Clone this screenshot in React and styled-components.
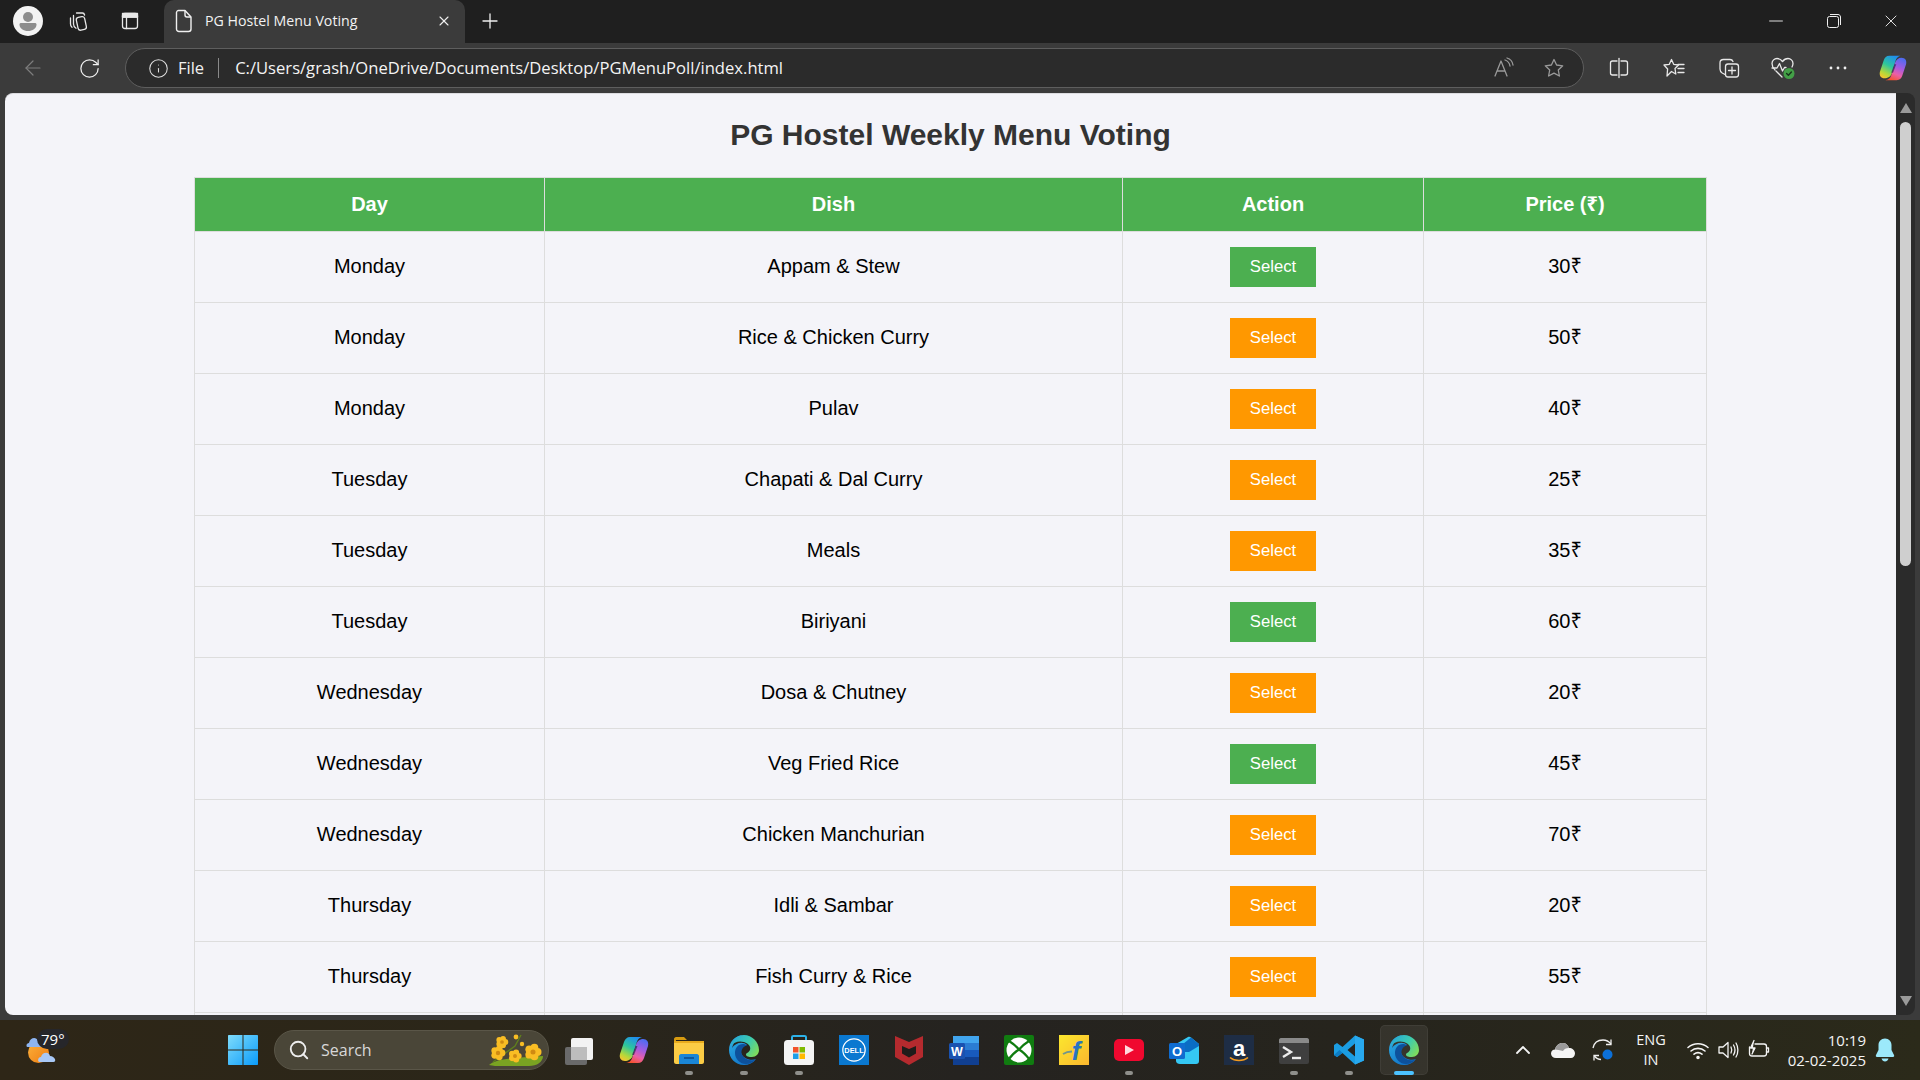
import React from 'react';
import styled, { createGlobalStyle } from 'styled-components';
import { ArrowLeft, ChevronUp, Info, Minus, Plus, RotateCw, Search, X } from 'lucide-react';

const GlobalStyle = createGlobalStyle`
  html, body {
    margin: 0;
    height: 100%;
    overflow: hidden;
    background: #3b3b3b;
  }
  * {
    box-sizing: border-box;
  }
`;

const GREEN = '#4caf50';
const ORANGE = '#ff9800';

const menu = [
  ['Monday', 'Appam & Stew', GREEN, '30₹'],
  ['Monday', 'Rice & Chicken Curry', ORANGE, '50₹'],
  ['Monday', 'Pulav', ORANGE, '40₹'],
  ['Tuesday', 'Chapati & Dal Curry', ORANGE, '25₹'],
  ['Tuesday', 'Meals', ORANGE, '35₹'],
  ['Tuesday', 'Biriyani', GREEN, '60₹'],
  ['Wednesday', 'Dosa & Chutney', ORANGE, '20₹'],
  ['Wednesday', 'Veg Fried Rice', GREEN, '45₹'],
  ['Wednesday', 'Chicken Manchurian', ORANGE, '70₹'],
  ['Thursday', 'Idli & Sambar', ORANGE, '20₹'],
  ['Thursday', 'Fish Curry & Rice', ORANGE, '55₹'],
];

/* ---- browser chrome icons ---- */

const Glyph = ({ size = 24, children, stroke = '#e8e8e8', width = 1.3 }) => (
  <svg width={size} height={size} viewBox="0 0 24 24" fill="none" stroke={stroke} strokeWidth={width} strokeLinecap="round" strokeLinejoin="round">
    {children}
  </svg>
);

const Avatar = () => (
  <svg width="30" height="30" viewBox="0 0 30 30">
    <circle cx="15" cy="15" r="15" fill="#f3f3f3" />
    <circle cx="15" cy="11" r="5" fill="#8d8d8d" />
    <path d="M6.5 18.5 C6.5 17.4 7.4 17 8.5 17 H21.5 C22.6 17 23.5 17.4 23.5 18.5 C23.5 22.5 19.5 25 15 25 C10.5 25 6.5 22.5 6.5 18.5Z" fill="#8d8d8d" />
  </svg>
);

const CollectionsTabIcon = () => (
  <Glyph>
    <path d="M4.5 9 L4.5 15 C4.5 16.5 5 17.5 6 18.3" />
    <path d="M7.5 6.5 L7.5 15 C7.5 17 8.5 18.3 10 19.2" />
    <rect x="11" y="8" width="8.5" height="13" rx="2.5" transform="rotate(-12 15 14)" />
    <path d="M10.5 4 L16.5 4 C17.6 4 18.3 4.8 18.6 6" />
  </Glyph>
);

const VerticalTabsIcon = () => (
  <Glyph>
    <rect x="4.5" y="4.5" width="15" height="15" rx="2.5" />
    <path d="M4.5 8 H19.5 M8.5 8 V19.5" />
    <rect x="4.5" y="4.5" width="15" height="3.5" fill="#e8e8e8" />
  </Glyph>
);

const DocIcon = () => (
  <svg width="18" height="24" viewBox="0 0 18 24" fill="none" stroke="#f0f0f0" strokeWidth="1.4" strokeLinejoin="round">
    <path d="M3.5 1.5 H10 L16 8 V20 C16 21.5 15 22.5 13.5 22.5 H4 C2.5 22.5 1.5 21.5 1.5 20 V3.5 C1.5 2.5 2.5 1.5 3.5 1.5Z" />
    <path d="M10 1.5 V6 C10 7.2 10.8 8 12 8 H16" />
  </svg>
);

const RestoreIcon = () => (
  <svg width="14" height="14" viewBox="0 0 14 14" fill="none" stroke="#f0f0f0" strokeWidth="1">
    <rect x="0.5" y="2.5" width="11" height="11" rx="2" />
    <path d="M3 0.5 H11 C12.4 0.5 13.5 1.6 13.5 3 V11" />
  </svg>
);

const ReadAloudIcon = () => (
  <Glyph stroke="#9a9a9a">
    <path d="M3 20 L9 5 L15 20 M5 15 H13" />
    <path d="M13 4 C16 5 17.5 7 18 10 M15 2 C18.5 3 20.5 5.5 21 9" />
  </Glyph>
);

const StarIcon = ({ stroke }) => (
  <Glyph stroke={stroke}>
    <path d="M12 3.5 L14.6 9 L20.7 9.8 L16.3 14 L17.4 20 L12 17.1 L6.6 20 L7.7 14 L3.3 9.8 L9.4 9Z" />
  </Glyph>
);

const SplitIcon = () => (
  <Glyph>
    <path d="M10 5 H5.5 C4.4 5 3.5 5.9 3.5 7 V17 C3.5 18.1 4.4 19 5.5 19 H10" />
    <path d="M14 5 H18.5 C19.6 5 20.5 5.9 20.5 7 V17 C20.5 18.1 19.6 19 18.5 19 H14" />
    <path d="M12 2.5 V21.5" />
  </Glyph>
);

const FavoritesIcon = () => (
  <Glyph>
    <path d="M9.5 3.5 L11.7 8.3 L16.5 9 L13 12.5 L13.8 18 L9.5 15.5 L5 20 L5.6 13 L2 9 L7.3 8.3Z" />
    <path d="M16 8.5 H22 M16 12.5 H22 M16 16.5 H22" />
  </Glyph>
);

const CollectionsIcon = () => (
  <Glyph>
    <path d="M8 18.5 L5.2 17 C4 16.3 3 14.8 3 13 V7 C3 5 4.5 3.5 6.5 3.5 H13 C14.5 3.5 15.5 4.2 16 5.5" />
    <rect x="8.5" y="8" width="13" height="13" rx="2.5" />
    <path d="M15 11 V18 M11.5 14.5 H18.5" />
  </Glyph>
);

const HealthIcon = () => (
  <svg width="26" height="26" viewBox="0 0 26 26" fill="none" stroke="#e8e8e8" strokeWidth="1.3" strokeLinejoin="round" strokeLinecap="round">
    <path d="M5 15 C2.5 12.5 2 10.5 2 8.5 C2 5.5 4.5 3.5 7 3.5 C9 3.5 11 4.5 12.5 6.5 C14 4.5 16 3.5 18 3.5 C20.5 3.5 23 5.5 23 8.5 C23 10 22.5 11 22 12" />
    <path d="M2 13 H7 L9.5 8.5 L12.5 16 L14.5 12.5 H16" />
    <path d="M6 16 L12 22" />
    <circle cx="19" cy="18.5" r="5.5" fill="#43a047" stroke="none" />
    <path d="M16.6 18.5 L18.4 20.3 L21.4 17" stroke="#17331a" strokeWidth="1.4" />
  </svg>
);

const MoreIcon = () => (
  <svg width="20" height="6" viewBox="0 0 20 6" fill="#f0f0f0">
    <circle cx="3" cy="3" r="1.4" />
    <circle cx="10" cy="3" r="1.4" />
    <circle cx="17" cy="3" r="1.4" />
  </svg>
);

const CopilotIcon = ({ size = 30 }) => (
  <svg width={size} height={size} viewBox="0 0 30 30">
    <defs>
      <linearGradient id="copLeft" x1="0.7" y1="0" x2="0.2" y2="1">
        <stop offset="0" stopColor="#1f8df0" />
        <stop offset="0.45" stopColor="#2dc79c" />
        <stop offset="0.8" stopColor="#b5d83a" />
        <stop offset="1" stopColor="#f7c52e" />
      </linearGradient>
      <linearGradient id="copRight" x1="0.7" y1="0" x2="0.3" y2="1">
        <stop offset="0" stopColor="#4f6bf0" />
        <stop offset="0.4" stopColor="#a45be0" />
        <stop offset="0.7" stopColor="#ea5fa8" />
        <stop offset="1" stopColor="#f5532f" />
      </linearGradient>
    </defs>
    <path d="M11 2 H23 C20 2.5 18.5 5 17.5 8 L14 20 C13 24 9 26 6 26 C2 26 0 23 1 19 L5 7 C6 4 8 2 11 2Z" fill="url(#copLeft)" />
    <path d="M19 28 H7 C11 27.5 12.5 25 13.5 22 L17 10 C18 6 21 4 24 4 C28 4 30 7 29 11 L25 23 C24 26 22 28 19 28Z" fill="url(#copRight)" />
    <path d="M16.5 11 L18.5 11 L15 20 L13 20Z" fill="#1a1a40" opacity="0.6" />
  </svg>
);

/* ---- taskbar pictures ---- */

const Weather = () => (
  <svg width="32" height="32" viewBox="0 0 32 32">
    <defs>
      <linearGradient id="sun" x1="0" y1="0" x2="1" y2="1">
        <stop offset="0" stopColor="#fbb03b" />
        <stop offset="1" stopColor="#ef7d12" />
      </linearGradient>
    </defs>
    <circle cx="12.5" cy="18.5" r="10.5" fill="url(#sun)" />
    <path d="M1.5 13 C0 13 0 9 3 9 C4 4 10 2 12 7 C16 7 17 13 14 13Z" fill="#8db4f0" />
    <path d="M13.5 28 C11.5 28 11.5 23 15 23 C16 18 23 17 24 22 C29 22 31 28 27.5 28Z" fill="#a9c8f5" />
  </svg>
);

const WindowsLogo = () => (
  <svg width="30" height="30" viewBox="0 0 30 30">
    <defs>
      <linearGradient id="win" x1="0" y1="0" x2="1" y2="1">
        <stop offset="0" stopColor="#7fdcfb" />
        <stop offset="1" stopColor="#0a9bfb" />
      </linearGradient>
    </defs>
    <path d="M1 0 H14.5 V14.5 H0 V1 C0 .4 .4 0 1 0Z M15.5 0 H29 C29.6 0 30 .4 30 1 V14.5 H15.5Z M0 15.5 H14.5 V30 H1 C.4 30 0 29.6 0 29Z M15.5 15.5 H30 V29 C30 29.6 29.6 30 29 30 H15.5Z" fill="url(#win)" />
  </svg>
);

const Blossom = ({ x, y, r }) => (
  <g>
    {[0, 72, 144, 216, 288].map((angle) => (
      <circle
        key={angle}
        cx={x + r * Math.cos((angle * Math.PI) / 180)}
        cy={y + r * Math.sin((angle * Math.PI) / 180)}
        r={r * 0.85}
        fill="#f9bd24"
      />
    ))}
    <circle cx={x} cy={y} r={r * 0.55} fill="#d08a12" />
  </g>
);

const Flowers = () => (
  <svg width="58" height="36" viewBox="0 0 58 36">
    <path d="M2 33 C10 26 30 26 56 24 C56 30 50 34 42 34 H8Z" fill="#7aa322" />
    <path d="M6 30 L28 14 L34 3" stroke="#5f7f1d" strokeWidth="1.4" fill="none" />
    <Blossom x={15} y={10} r={3.4} />
    <Blossom x={11} y={21} r={4} />
    <Blossom x={28} y={24} r={3.6} />
    <Blossom x={46} y={20} r={4.6} />
    <circle cx="29" cy="5" r="2.4" fill="#f9bd24" />
    <circle cx="35" cy="12" r="2.2" fill="#f9bd24" />
  </svg>
);

const TaskView = () => (
  <svg width="30" height="30" viewBox="0 0 30 30">
    <rect x="1" y="12" width="22" height="18" rx="2" fill="#6a6a6a" />
    <rect x="7" y="3" width="22" height="22" rx="2" fill="#f2f2f2" />
    <rect x="7" y="12" width="16" height="13" fill="#bdbdbd" />
  </svg>
);

const Explorer = () => (
  <svg width="30" height="30" viewBox="0 0 30 30">
    <path d="M0 4 C0 3 1 2 2 2 H10 L13 5 H2 V8 H0Z" fill="#d69a10" />
    <path d="M0 6 H30 V27 C30 28 29 29 28 29 H2 C1 29 0 28 0 27Z" fill="#fbcc45" />
    <path d="M0 6 H30 V8 H0Z" fill="#e9ac1e" />
    <path d="M5 21 C5 20 6 19 7 19 H23 C24 19 25 20 25 21 V29 H5Z" fill="#1a86d6" />
    <path d="M10 23 H20" stroke="#0b4f8e" strokeWidth="1.6" />
  </svg>
);

const Edge = () => (
  <svg width="30" height="30" viewBox="0 0 30 30">
    <defs>
      <linearGradient id="edgeBlue" x1="0" y1="0" x2="0.7" y2="1">
        <stop offset="0" stopColor="#2fb4e8" />
        <stop offset="1" stopColor="#0f6fc6" />
      </linearGradient>
      <linearGradient id="edgeGreen" x1="0" y1="0.2" x2="1" y2="0.7">
        <stop offset="0" stopColor="#27a7d8" />
        <stop offset="0.55" stopColor="#3ccbb0" />
        <stop offset="1" stopColor="#7fdc5c" />
      </linearGradient>
    </defs>
    <path d="M15 0 C6 0 0 7 0 15 C0 23 6 30 15 30 C20 30 24 28 27 24 C22 26 14 24 12 18 C11 14 13 10 18 10 C14 6 6 8 3 13 C5 6 10 0 15 0Z" fill="url(#edgeBlue)" />
    <path d="M15 0 C8 0 3 5 1.5 11 C5 7 10 5.5 15 7 C20 8.5 22 12 21 15 C20 17.5 17 18 17 19.5 C17 21.5 20 22 23 22 C27 22 30 19 30 15 C30 7 23 0 15 0Z" fill="url(#edgeGreen)" />
    <path d="M14 9 C9 9 6 13 6 18 C6 24 11 29 17 29 C20 29 24 27.5 26 25 C21 26.5 15 24 13 19.5 C11.5 16 13.5 11 18 10.5 C17 9.5 15.5 9 14 9Z" fill="#0d519c" />
  </svg>
);

const Store = () => (
  <svg width="30" height="30" viewBox="0 0 30 30">
    <path d="M8 6 V2 C8 1 9 1 9.5 1 H20.5 C21 1 22 1 22 2 V6" fill="none" stroke="#2db3ea" strokeWidth="2" />
    <rect x="0" y="5" width="30" height="25" rx="3.5" fill="#f4f4f4" />
    <rect x="9" y="12" width="5.5" height="5.5" fill="#f2532a" />
    <rect x="15.5" y="12" width="5.5" height="5.5" fill="#7fba00" />
    <rect x="9" y="18.5" width="5.5" height="5.5" fill="#1e9fe8" />
    <rect x="15.5" y="18.5" width="5.5" height="5.5" fill="#ffb900" />
  </svg>
);

const Dell = () => (
  <svg width="30" height="30" viewBox="0 0 30 30">
    <rect width="30" height="30" fill="#0a78d0" />
    <circle cx="15" cy="15" r="11.2" fill="none" stroke="#fff" strokeWidth="1.2" />
    <text x="15" y="17.6" textAnchor="middle" fontFamily="Liberation Sans" fontWeight="700" fontSize="7.4" fill="#fff">DELL</text>
  </svg>
);

const McAfee = () => (
  <svg width="28" height="30" viewBox="0 0 28 30">
    <path d="M0 1 L14 7 L28 1 V22 L14 30 L0 22Z" fill="#b52a2e" />
    <path d="M7 11 L14 14 L21 11 V18.5 L14 22.5 L7 18.5Z" fill="#1f1c1a" />
  </svg>
);

const Word = () => (
  <svg width="30" height="30" viewBox="0 0 30 30">
    <rect x="4" y="1" width="26" height="29" rx="1.5" fill="#185abd" />
    <rect x="4" y="1" width="26" height="7" fill="#41a5ee" />
    <rect x="4" y="8" width="26" height="7" fill="#2b7cd3" />
    <rect x="4" y="22" width="26" height="8" fill="#103f91" />
    <rect x="0" y="8" width="16" height="16" rx="1.5" fill="#1a52b0" />
    <text x="8" y="20.5" textAnchor="middle" fontFamily="Liberation Sans" fontWeight="700" fontSize="12.5" fill="#fff">W</text>
  </svg>
);

const Xbox = () => (
  <svg width="30" height="30" viewBox="0 0 30 30">
    <rect width="30" height="30" rx="2" fill="#107c10" />
    <circle cx="15" cy="15" r="12.5" fill="#fff" />
    <path d="M5 6 C9 8.5 12.5 11.5 15 14.5 C17.5 11.5 21 8.5 25 6" fill="none" stroke="#107c10" strokeWidth="2.2" />
    <path d="M4.5 24.5 C7.5 20.5 11.5 16.5 15 14.5 C18.5 16.5 22.5 20.5 25.5 24.5" fill="none" stroke="#107c10" strokeWidth="2.2" />
  </svg>
);

const Flipkart = () => (
  <svg width="30" height="30" viewBox="0 0 30 30">
    <defs>
      <linearGradient id="flip" x1="0" y1="0" x2="1" y2="1">
        <stop offset="0" stopColor="#fbe72e" />
        <stop offset="1" stopColor="#fbb72e" />
      </linearGradient>
    </defs>
    <rect width="30" height="30" fill="url(#flip)" />
    <text x="17" y="25" textAnchor="middle" fontFamily="Liberation Sans" fontStyle="italic" fontWeight="700" fontSize="26" fill="#2874c0">f</text>
    <path d="M4 19 C7 17 10 16.5 13 16.5" stroke="#2874c0" strokeWidth="1.8" fill="none" opacity="0.65" />
  </svg>
);

const YouTube = () => (
  <svg width="30" height="22" viewBox="0 0 30 22">
    <rect width="30" height="22" rx="5" fill="#f0082f" />
    <path d="M11 6 L20 11 L11 16Z" fill="#ffd9df" />
  </svg>
);

const Outlook = () => (
  <svg width="30" height="30" viewBox="0 0 30 30">
    <path d="M7 9 L19 2 C20 1.5 21 1.5 22 2.5 L30 9 V26 C30 28 29 29 27 29 H11 C9 29 7 28 7 26Z" fill="#35c8f4" />
    <path d="M14 9 L22 2.5 L30 9 V11 L20 17 H14Z" fill="#0a6cc4" />
    <rect x="0" y="8" width="16" height="16" rx="1.5" fill="#0f6cd0" />
    <text x="8" y="20.5" textAnchor="middle" fontFamily="Liberation Sans" fontWeight="700" fontSize="13" fill="#fff">O</text>
  </svg>
);

const Amazon = () => (
  <svg width="30" height="30" viewBox="0 0 30 30">
    <rect width="30" height="30" fill="#1e2d45" />
    <text x="15" y="21" textAnchor="middle" fontFamily="Liberation Sans" fontWeight="700" fontSize="22" fill="#fff">a</text>
    <path d="M6 22.5 C11 26.5 19 26.5 24 22.5" fill="none" stroke="#f29a1f" strokeWidth="1.6" />
  </svg>
);

const Terminal = () => (
  <svg width="30" height="30" viewBox="0 0 30 30">
    <rect x="0" y="3" width="30" height="26" rx="2" fill="#3f3f3f" />
    <path d="M0 5 C0 4 1 3 2 3 H28 C29 3 30 4 30 5 V8 H0Z" fill="#8a8a8a" />
    <path d="M4 12 L12 17 L4 22" fill="none" stroke="#ececec" strokeWidth="2.4" />
    <path d="M13 23 H22" stroke="#ececec" strokeWidth="2.4" />
  </svg>
);

const VSCode = () => (
  <svg width="30" height="30" viewBox="0 0 30 30">
    <path d="M21 0.5 L30 4.5 V25.5 L21 29.5 L8.5 18 L3 22 L0 20 V10 L3 8 L8.5 12Z M21 8.5 L13.5 15 L21 21.5Z" fill="#1b9de2" />
    <path d="M21 0.5 L30 4.5 V25.5 L21 29.5Z" fill="#28a9ee" />
    <path d="M0 20 L3 22 L8.5 18 L5.5 15 Z" fill="#0d7cc4" />
  </svg>
);

const CloudIcon = () => (
  <svg width="24" height="16" viewBox="0 0 24 16">
    <path d="M5 16 C2 16 0 14 0 11.5 C0 9 2 7.5 4 7.5 C5 3 9 0.5 12 1 C15 1 17 3 18 6 C21 6 24 8 24 11.5 C24 14 22 16 20 16Z" fill="#f4f4f4" />
    <path d="M4 7.5 C5 3 9 0.5 12 1 C15 1 17 3 18 6 C15 6 13 7 12 9 C9 8 6 8 4 7.5Z" fill="#9a9a9a" />
  </svg>
);

const SyncIcon = () => (
  <svg width="24" height="24" viewBox="0 0 24 24" fill="none" stroke="#f0f0f0" strokeWidth="1.3">
    <path d="M2 10 C3 5 7 2 12 2 C15 2 18 3.5 20 6" />
    <path d="M20 1.5 V6.5 H15" />
    <path d="M10 21.5 C7 21.5 5 20 3.5 18" />
    <path d="M3 22.5 V17.5 H8" />
    <circle cx="16.5" cy="16.5" r="5" fill="#0c70d8" stroke="none" />
  </svg>
);

const WifiIcon = () => (
  <Glyph width={1.6} stroke="#f4f4f4">
    <path d="M2 9.5 C7.5 4.5 16.5 4.5 22 9.5" />
    <path d="M5 13 C9 9.5 15 9.5 19 13" />
    <path d="M8 16.2 C10.5 14.2 13.5 14.2 16 16.2" />
    <circle cx="12" cy="19.5" r="1" fill="#f4f4f4" />
  </Glyph>
);

const VolumeIcon = () => (
  <Glyph stroke="#f4f4f4">
    <path d="M3 9 H7 L12 4.5 V19.5 L7 15 H3Z" />
    <path d="M15 9 C16 11 16 13 15 15 M17.5 7 C19.3 10 19.3 14 17.5 17 M20 5 C22.5 9 22.5 15 20 19" />
  </Glyph>
);

const BatteryIcon = () => (
  <Glyph stroke="#f4f4f4">
    <path d="M9 6 H18 C19.5 6 20.5 7 20.5 8.5 V15.5 C20.5 17 19.5 18 18 18 H6 C4.5 18 3.5 17 3.5 15.5 V9" />
    <path d="M20.5 10 H22.5 V14 H20.5" />
    <path d="M8 2.5 L4.5 10 H9 L6 16" fill="#f4f4f4" />
  </Glyph>
);

const BellIcon = () => (
  <svg width="20" height="24" viewBox="0 0 20 24">
    <path d="M10 0.5 C6 0.5 3.5 3.5 3.5 7 V12 L1 17 C0.5 18 1 19 2 19 H18 C19 19 19.5 18 19 17 L16.5 12 V7 C16.5 3.5 14 0.5 10 0.5Z" fill="#9ce9fb" />
    <path d="M6.5 20.5 H13.5 C13 22.5 11.5 23.5 10 23.5 C8.5 23.5 7 22.5 6.5 20.5Z" fill="#9ce9fb" />
  </svg>
);

const apps = [
  { key: 'taskview', icon: <TaskView /> },
  { key: 'copilot', icon: <CopilotIcon /> },
  { key: 'explorer', icon: <Explorer />, open: true },
  { key: 'edge', icon: <Edge />, open: true },
  { key: 'store', icon: <Store />, open: true },
  { key: 'dell', icon: <Dell /> },
  { key: 'mcafee', icon: <McAfee /> },
  { key: 'word', icon: <Word /> },
  { key: 'xbox', icon: <Xbox /> },
  { key: 'flipkart', icon: <Flipkart /> },
  { key: 'youtube', icon: <YouTube />, open: true },
  { key: 'outlook', icon: <Outlook /> },
  { key: 'amazon', icon: <Amazon /> },
  { key: 'terminal', icon: <Terminal />, open: true },
  { key: 'vscode', icon: <VSCode />, open: true },
  { key: 'edge-active', icon: <Edge />, active: true },
];

export default function App() {
  return (
    <>
      <GlobalStyle />
      <Screen>
        <TabStrip>
          <StripButton $w={56}><Avatar /></StripButton>
          <StripButton $w={44}><CollectionsTabIcon /></StripButton>
          <StripButton $w={60}><VerticalTabsIcon /></StripButton>
          <Tab>
            <DocIcon />
            <TabTitle>PG Hostel Menu Voting</TabTitle>
            <X size={16} color="#f0f0f0" strokeWidth={1.6} />
          </Tab>
          <StripButton $w={50}><Plus size={24} color="#f0f0f0" strokeWidth={1.3} /></StripButton>
          <WindowControls>
            <WindowButton><Minus size={22} color="#f0f0f0" strokeWidth={1} /></WindowButton>
            <WindowButton><RestoreIcon /></WindowButton>
            <WindowButton><X size={20} color="#f0f0f0" strokeWidth={1.1} /></WindowButton>
          </WindowControls>
        </TabStrip>

        <Toolbar>
          <NavButton><ArrowLeft size={24} color="#7d7d7d" strokeWidth={1.2} /></NavButton>
          <NavButton><RotateCw size={23} color="#f0f0f0" strokeWidth={1.3} /></NavButton>
          <Omnibox>
            <Info size={21} color="#e0e0e0" strokeWidth={1.2} />
            <FileLabel>File</FileLabel>
            <OmniDivider />
            <Url>C:/Users/grash/OneDrive/Documents/Desktop/PGMenuPoll/index.html</Url>
            <OmniIcons>
              <ReadAloudIcon />
              <StarIcon stroke="#9a9a9a" />
            </OmniIcons>
          </Omnibox>
          <ToolIcons>
            <ToolSlot><SplitIcon /></ToolSlot>
            <ToolSlot><FavoritesIcon /></ToolSlot>
            <ToolSlot><CollectionsIcon /></ToolSlot>
            <ToolSlot><HealthIcon /></ToolSlot>
            <ToolSlot><MoreIcon /></ToolSlot>
            <ToolSlot><CopilotIcon size={28} /></ToolSlot>
          </ToolIcons>
        </Toolbar>

        <Viewport>
          <Page>
            <Title>PG Hostel Weekly Menu Voting</Title>
            <MenuTable>
              <colgroup>
                <col width="350" />
                <col width="578" />
                <col width="301" />
                <col width="283" />
              </colgroup>
              <thead>
                <tr>
                  <HeadCell>Day</HeadCell>
                  <HeadCell>Dish</HeadCell>
                  <HeadCell>Action</HeadCell>
                  <HeadCell>Price (₹)</HeadCell>
                </tr>
              </thead>
              <tbody>
                {menu.map(([day, dish, color, price]) => (
                  <tr key={dish}>
                    <Cell>{day}</Cell>
                    <Cell>{dish}</Cell>
                    <ActionCell><SelectButton $color={color}>Select</SelectButton></ActionCell>
                    <Cell>{price}</Cell>
                  </tr>
                ))}
                <tr>
                  <Cell />
                  <Cell />
                  <Cell />
                  <Cell />
                </tr>
              </tbody>
            </MenuTable>
          </Page>
          <Scrollbar>
            <ScrollArrow />
            <ScrollThumb />
            <ScrollArrow $down />
          </Scrollbar>
        </Viewport>

        <Taskbar>
          <WeatherSlot>
            <Weather />
            <TempBadge>79°</TempBadge>
          </WeatherSlot>
          <StartSlot><WindowsLogo /></StartSlot>
          <SearchBox>
            <Search size={22} color="#eeeeee" strokeWidth={2} />
            <SearchText>Search</SearchText>
            <FlowerWrap><Flowers /></FlowerWrap>
          </SearchBox>
          <Apps>
            {apps.map((app) => (
              <AppSlot key={app.key} $active={app.active}>
                {app.icon}
                {(app.open || app.active) && <RunDot $active={app.active} />}
              </AppSlot>
            ))}
          </Apps>
          <Tray>
            <TraySlot $w={40}><ChevronUp size={24} color="#f4f4f4" strokeWidth={1.8} /></TraySlot>
            <TraySlot $w={40}><CloudIcon /></TraySlot>
            <TraySlot $w={40}><SyncIcon /></TraySlot>
            <Lang>ENG<br />IN</Lang>
            <TraySlot $w={30}><WifiIcon /></TraySlot>
            <TraySlot $w={30}><VolumeIcon /></TraySlot>
            <TraySlot $w={30}><BatteryIcon /></TraySlot>
            <Clock>10:19<br />02-02-2025</Clock>
            <TraySlot $w={38}><BellIcon /></TraySlot>
          </Tray>
        </Taskbar>
      </Screen>
    </>
  );
}

const Screen = styled.div`
  display: flex;
  flex-direction: column;
  height: 100vh;
  width: 100vw;
  overflow: hidden;
  font-family: 'Open Sans', 'Noto Sans', sans-serif;
`;

const TabStrip = styled.div`
  display: flex;
  align-items: flex-start;
  flex: 0 0 43px;
  background: #1f1f1f;
`;

const StripButton = styled.div`
  display: flex;
  align-items: center;
  justify-content: center;
  flex: 0 0 ${(p) => p.$w}px;
  height: 41px;
`;

const Tab = styled.div`
  display: flex;
  align-items: center;
  flex: 0 0 301px;
  height: 43px;
  margin-left: 4px;
  padding: 0 13px 2px 11px;
  background: #3b3b3b;
  border-radius: 10px 10px 0 0;
`;

const TabTitle = styled.span`
  flex: 1;
  margin-left: 12px;
  color: #f2f2f2;
  font-size: 14.2px;
  line-height: 20px;
`;

const WindowControls = styled.div`
  display: flex;
  margin-left: auto;
`;

const WindowButton = styled.div`
  display: flex;
  align-items: center;
  justify-content: center;
  width: 57.5px;
  height: 41px;
`;

const Toolbar = styled.div`
  display: flex;
  align-items: center;
  flex: 0 0 50px;
  background: #3b3b3b;
  padding-left: 5px;
`;

const NavButton = styled.div`
  display: flex;
  align-items: center;
  justify-content: center;
  flex: 0 0 56px;
  height: 40px;
`;

const Omnibox = styled.div`
  display: flex;
  align-items: center;
  flex: 0 0 1459px;
  height: 40px;
  margin-left: 8px;
  padding: 0 17px 0 22px;
  background: #2b2b2b;
  border: 1px solid #5e5e5e;
  border-radius: 20px;
`;

const FileLabel = styled.span`
  margin: 0 0 2px 9px;
  color: #f0f0f0;
  font-size: 16.5px;
`;

const OmniDivider = styled.span`
  width: 1px;
  height: 20px;
  margin: 0 16px 0 14px;
  background: #8a8a8a;
`;

const Url = styled.span`
  flex: 1;
  margin-bottom: 2px;
  color: #f4f4f4;
  font-size: 16.6px;
`;

const OmniIcons = styled.div`
  display: flex;
  gap: 26px;
`;

const ToolIcons = styled.div`
  display: flex;
  flex: 1;
  margin-left: 8px;
`;

const ToolSlot = styled.div`
  display: flex;
  align-items: center;
  justify-content: center;
  flex: 1;
  height: 40px;
`;

const Viewport = styled.div`
  display: flex;
  flex: 1;
  min-height: 0;
  padding: 0 5px 5px 5px;
  background: #3b3b3b;
`;

const Page = styled.main`
  flex: 1;
  overflow: hidden;
  background: #f4f4f9;
  border-top: 1px solid #dcdce0;
  border-radius: 8px 0 0 8px;
  font-family: 'Liberation Sans', 'Noto Sans', Arial, sans-serif;
`;

const Title = styled.h1`
  margin: 24px 0 25px;
  color: #333;
  font-size: 30px;
  line-height: 34px;
  font-weight: 700;
  text-align: center;
`;

const MenuTable = styled.table`
  width: 80%;
  margin: 0 auto;
  table-layout: fixed;
  border-collapse: collapse;
`;

const HeadCell = styled.th`
  padding: 15px;
  background: ${GREEN};
  border: 1px solid #ddd;
  color: #fff;
  font-size: 20px;
  line-height: 23px;
  font-weight: 700;
  text-align: center;
`;

const Cell = styled.td`
  padding: 14px 15px 16px;
  height: 71px;
  border: 1px solid #ddd;
  color: #000;
  font-size: 20px;
  line-height: 23px;
  text-align: center;
`;

const ActionCell = styled(Cell)`
  padding: 15px;
`;

const SelectButton = styled.button`
  display: block;
  height: 40px;
  margin: 0 auto;
  padding: 0 20px;
  background: ${(p) => p.$color};
  border: 0;
  color: #fff;
  font-family: 'Liberation Sans', Arial, sans-serif;
  font-size: 16.67px;
`;

const Scrollbar = styled.div`
  display: flex;
  flex-direction: column;
  align-items: center;
  flex: 0 0 19px;
  padding: 10px 0 9px;
  background: #2b2b2b;
  border-radius: 0 8px 8px 0;
`;

const ScrollArrow = styled.div`
  width: 0;
  height: 0;
  border-left: 6.5px solid transparent;
  border-right: 6.5px solid transparent;
  ${(p) => (p.$down ? 'border-top: 10px solid #9a9a9a; margin-top: auto;' : 'border-bottom: 10px solid #9a9a9a;')}
`;

const ScrollThumb = styled.div`
  width: 11px;
  height: 444px;
  margin-top: 9px;
  background: #cfcfcf;
  border-radius: 6px;
`;

const Taskbar = styled.footer`
  display: flex;
  align-items: center;
  flex: 0 0 60px;
  background: linear-gradient(90deg, #2e2617 0%, #2b2619 25%, #252320 50%, #26241d 70%, #2b2a1a 100%);
  color: #f4f4f4;
`;

const WeatherSlot = styled.div`
  position: relative;
  display: flex;
  align-items: center;
  flex: 0 0 215px;
  height: 60px;
  padding-left: 26px;
`;

const TempBadge = styled.span`
  position: absolute;
  left: 37px;
  top: 9px;
  padding: 0 4px;
  background: #26262a;
  border-radius: 10px;
  color: #fff;
  font-size: 15px;
  line-height: 20px;
`;

const StartSlot = styled.div`
  display: flex;
  align-items: center;
  justify-content: center;
  flex: 0 0 55px;
`;

const SearchBox = styled.div`
  position: relative;
  display: flex;
  align-items: center;
  flex: 0 0 275px;
  height: 40px;
  margin-left: 4px;
  padding-left: 13px;
  background: #4a4638;
  border: 1px solid #5a5648;
  border-radius: 20px;
`;

const SearchText = styled.span`
  margin-left: 11px;
  color: #d8d8d8;
  font-size: 16px;
`;

const FlowerWrap = styled.div`
  position: absolute;
  right: 3px;
  top: 1px;
`;

const Apps = styled.div`
  display: flex;
  margin-left: 2px;
`;

const AppSlot = styled.div`
  position: relative;
  display: flex;
  align-items: center;
  justify-content: center;
  width: 55px;
  height: 50px;
  ${(p) => p.$active && `
    &::before {
      content: '';
      position: absolute;
      inset: 0 3.5px;
      background: rgba(255, 255, 255, 0.07);
      border: 1px solid rgba(255, 255, 255, 0.05);
      border-radius: 5px;
    }
  `}
  svg {
    position: relative;
  }
`;

const RunDot = styled.span`
  position: absolute;
  bottom: 0;
  left: 50%;
  width: ${(p) => (p.$active ? 20 : 8)}px;
  height: 4px;
  transform: translateX(-50%);
  background: ${(p) => (p.$active ? '#4cc2ff' : '#8f8f8b')};
  border-radius: 2px;
`;

const Tray = styled.div`
  display: flex;
  align-items: center;
  margin-left: 72px;
`;

const TraySlot = styled.div`
  display: flex;
  align-items: center;
  justify-content: center;
  flex: 0 0 ${(p) => p.$w}px;
  height: 50px;
`;

const Lang = styled.div`
  flex: 0 0 56px;
  margin-right: 4px;
  font-size: 14.5px;
  line-height: 20px;
  text-align: center;
`;

const Clock = styled.div`
  flex: 0 0 93px;
  font-size: 15px;
  line-height: 20px;
  text-align: right;
`;
